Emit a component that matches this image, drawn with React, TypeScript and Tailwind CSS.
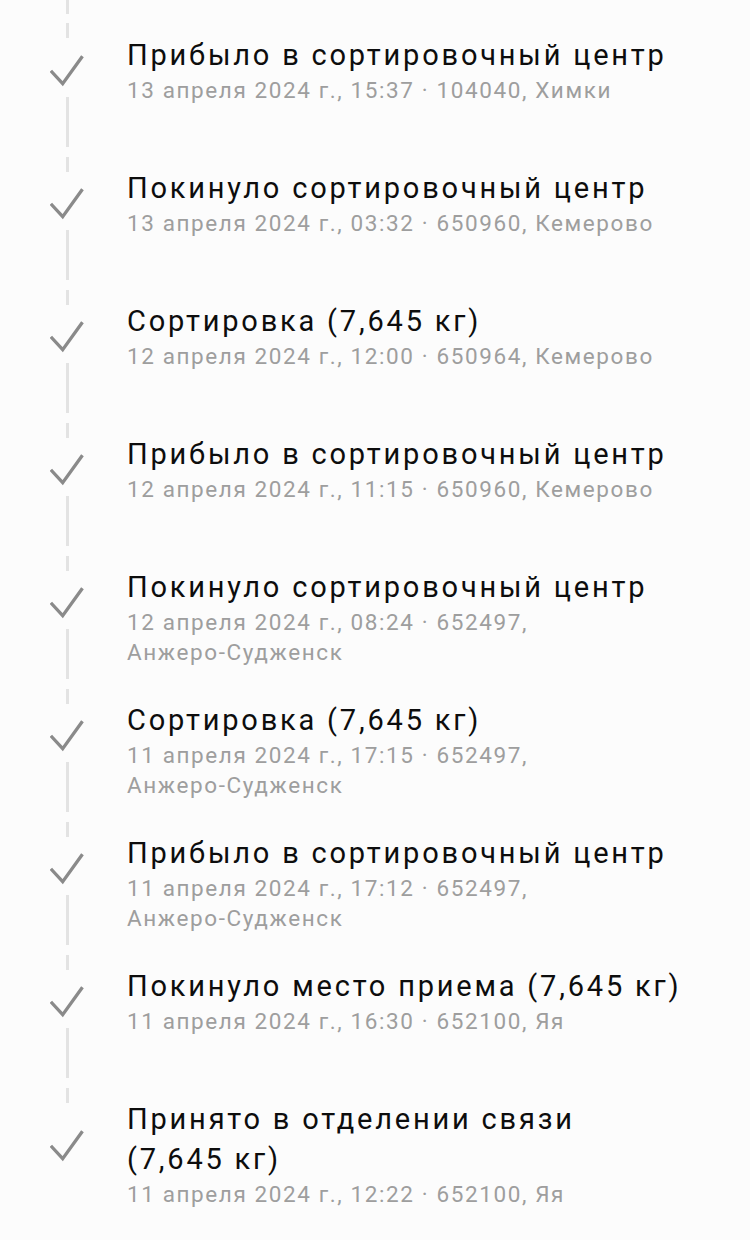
import React from 'react';

interface TrackEvent {
  title: string;
  date: string;
  index: string;
  city: string;
}

const events: TrackEvent[] = [
  { title: 'Прибыло в сортировочный центр', date: '13 апреля 2024 г., 15:37', index: '104040', city: 'Химки' },
  { title: 'Покинуло сортировочный центр', date: '13 апреля 2024 г., 03:32', index: '650960', city: 'Кемерово' },
  { title: 'Сортировка (7,645\u00a0кг)', date: '12 апреля 2024 г., 12:00', index: '650964', city: 'Кемерово' },
  { title: 'Прибыло в сортировочный центр', date: '12 апреля 2024 г., 11:15', index: '650960', city: 'Кемерово' },
  { title: 'Покинуло сортировочный центр', date: '12 апреля 2024 г., 08:24', index: '652497', city: 'Анжеро-Судженск' },
  { title: 'Сортировка (7,645\u00a0кг)', date: '11 апреля 2024 г., 17:15', index: '652497', city: 'Анжеро-Судженск' },
  { title: 'Прибыло в сортировочный центр', date: '11 апреля 2024 г., 17:12', index: '652497', city: 'Анжеро-Судженск' },
  { title: 'Покинуло место приема (7,645\u00a0кг)', date: '11 апреля 2024 г., 16:30', index: '652100', city: 'Яя' },
  { title: 'Принято в отделении связи (7,645\u00a0кг)', date: '11 апреля 2024 г., 12:22', index: '652100', city: 'Яя' },
];

function Check() {
  return (
    <svg width="34" height="32" viewBox="0 0 34 32" fill="none" className="shrink-0">
      <polyline points="2,17 12.7,28.6 31.5,2.6" stroke="#8a8a8a" strokeWidth="3.3" strokeLinecap="square" strokeLinejoin="miter" />
    </svg>
  );
}

function Dash({ className }: { className: string }) {
  return <div className={`w-[3px] bg-[#e3e3e3] ${className}`} />;
}

function EventRow({ event, last }: { event: TrackEvent; last: boolean }) {
  return (
    <div className={`flex ${last ? '' : 'h-[133px]'}`}>
      <div className="w-[127px] shrink-0">
        <div className={`ml-[50px] w-[34px] flex flex-col items-center ${last ? 'pt-[27px]' : 'pt-[16px]'}`}>
          <Check />
          {!last && (
            <>
              <Dash className="h-[50px] mt-[10px] ml-[1px]" />
              <Dash className="h-[15px] mt-[10px] ml-[1px]" />
            </>
          )}
        </div>
      </div>
      <div className="flex-1 pr-[36px] -mt-[4px]">
        <div className="text-[29px] leading-[40px] tracking-[2.8px] text-[#0d0d0d]">{event.title}</div>
        <div className="text-[22.5px] leading-[30px] tracking-[1.6px] text-[#9e9e9e]">
          {event.date} · {event.index}, <span className="whitespace-nowrap">{event.city}</span>
        </div>
      </div>
    </div>
  );
}

export default function App() {
  return (
    <div className="min-h-[1240px] w-[750px] bg-[#fcfcfc] overflow-hidden" style={{ fontFamily: 'Roboto, "Noto Sans", sans-serif' }}>
      {/* tail of the line from the item above the fold */}
      <div className="h-[39px] w-[127px]">
        <div className="ml-[50px] w-[34px] flex flex-col items-center">
          <Dash className="h-[14px] ml-[1px]" />
          <Dash className="h-[15px] mt-[9px] ml-[1px]" />
        </div>
      </div>
      {events.map((e, i) => (
        <EventRow key={i} event={e} last={i === events.length - 1} />
      ))}
    </div>
  );
}
